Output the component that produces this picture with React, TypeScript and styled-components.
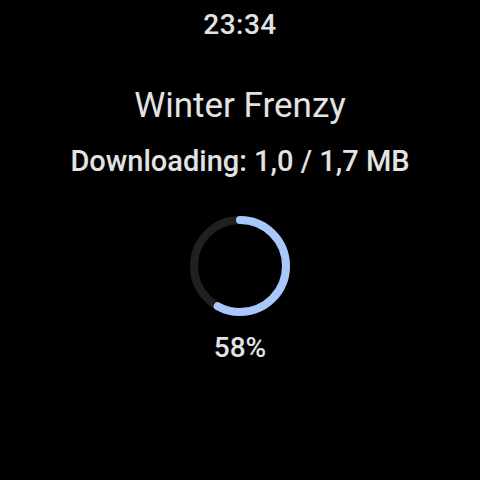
import { FunctionComponent } from "react";
import styled, { createGlobalStyle } from "styled-components";

const GlobalStyle = createGlobalStyle`
  html, body {
    margin: 0;
    padding: 0;
    background: #000;
  }
`;

const Screen = styled.div`
  width: 480px;
  height: 480px;
  background: #000;
  display: flex;
  flex-direction: column;
  align-items: center;
  box-sizing: border-box;
  padding-top: 6px;
  font-family: Roboto, "Noto Sans", sans-serif;
  color: #e3e3e3;
  overflow: hidden;
`;

const Clock = styled.div`
  font-size: 28px;
  font-weight: 500;
  line-height: 38px;
  letter-spacing: 0.5px;
`;

const Title = styled.div`
  margin-top: 40px;
  font-size: 35px;
  font-weight: 400;
  line-height: 44px;
`;

const Status = styled.div`
  margin-top: 16px;
  font-size: 29px;
  font-weight: 500;
  line-height: 34px;
`;

const RingWrap = styled.div`
  margin-top: 36px;
  width: 104px;
  height: 104px;
`;

const Percent = styled.div`
  margin-top: 13px;
  font-size: 28px;
  font-weight: 500;
  line-height: 34px;
`;

const Ring: FunctionComponent<{ value: number }> = ({ value }) => {
  const r = 46;
  const c = 2 * Math.PI * r;
  const len = c * value;
  return (
    <svg width="104" height="104" viewBox="0 0 104 104">
      <circle cx="52" cy="52" r={r} fill="none" stroke="#202020" strokeWidth="8" />
      <circle
        cx="52"
        cy="52"
        r={r}
        fill="none"
        stroke="#a8c7fa"
        strokeWidth="8"
        strokeLinecap="round"
        strokeDasharray={`${len} ${c}`}
        transform="rotate(-90 52 52)"
      />
    </svg>
  );
};

const App: FunctionComponent = () => {
  return (
    <>
      <GlobalStyle />
      <Screen>
        <Clock>23:34</Clock>
        <Title>Winter Frenzy</Title>
        <Status>Downloading: 1,0 / 1,7 MB</Status>
        <RingWrap>
          <Ring value={0.58} />
        </RingWrap>
        <Percent>58%</Percent>
      </Screen>
    </>
  );
};

export default App;
